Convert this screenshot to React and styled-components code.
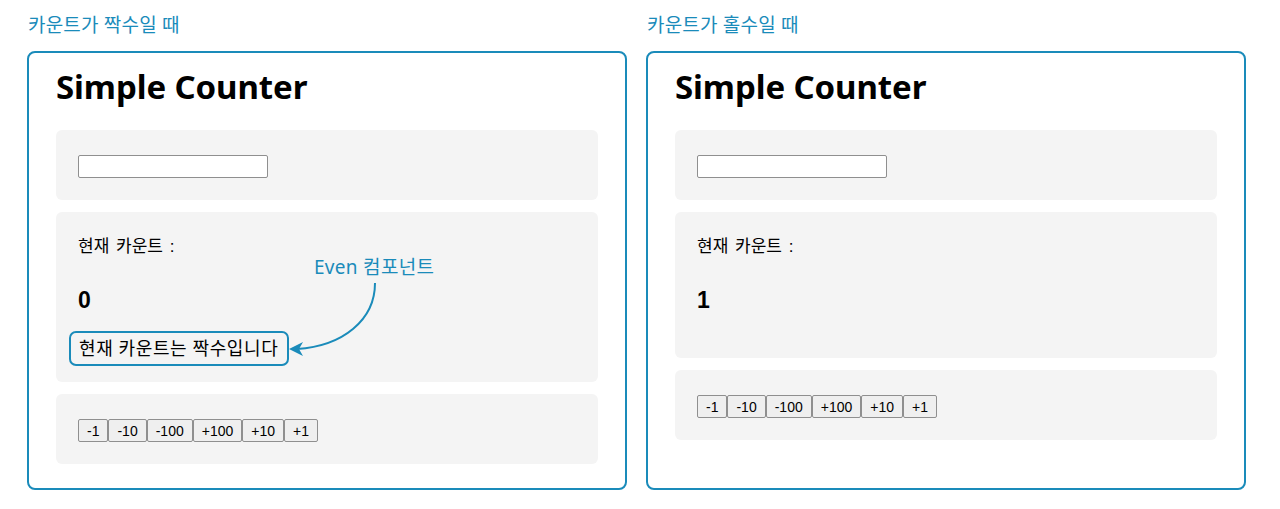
import React from 'react';
import styled, { createGlobalStyle } from 'styled-components';

const TEAL = '#1a8bba';
const STEPS = [-1, -10, -100, 100, 10, 1];

const GlobalStyle = createGlobalStyle`
    body{
        margin:0;
        background:#fff;
        font-family:"Liberation Sans", "Noto Sans CJK KR", sans-serif;
        color:#000;
    }
`;

const Page = styled.div`
    display:flex;
    gap:19px;
    padding:13px 0 0 27px;
`;
const Column = styled.div`
    width:600px;
    display:flex;
    flex-direction:column;
`;
const Caption = styled.div`
    font-family:"Noto Sans", "Noto Sans CJK KR", sans-serif;
    font-size:19px;
    line-height:24px;
    letter-spacing:0.2px;
    color:${TEAL};
    padding-left:1px;
    margin-bottom:14px;
`;
const Card = styled.div`
    flex:1;
    border:2px solid ${TEAL};
    border-radius:8px;
    padding:14px 27px 24px;
`;
const Title = styled.h1`
    margin:0 0 23px;
    font-family:"Noto Sans", sans-serif;
    font-size:33px;
    line-height:40px;
    font-weight:700;
    letter-spacing:-0.1px;
`;
const Stack = styled.div`
    display:flex;
    flex-direction:column;
    gap:12px;
`;
const Panel = styled.div`
    background:#f4f4f4;
    border-radius:6px;
    padding:25px 22px 22px;
`;
const CountPanel = styled(Panel)`
    position:relative;
    padding:23px 22px ${props => props.$hasMessage ? '16px' : '43px'};
`;
const TextInput = styled.input`
    display:block;
    box-sizing:border-box;
    width:190px;
    height:23px;
    margin:0;
    border:1px solid #8f8f8f;
    border-radius:2px;
    background:#fff;
`;
const Label = styled.div`
    font-size:17px;
    line-height:24px;
    word-spacing:2px;
`;
const Count = styled.div`
    margin-top:26px;
    font-size:23px;
    line-height:30px;
    font-weight:700;
`;
const EvenMessage = styled.div`
    display:inline-block;
    margin:16px 0 0 -9px;
    padding:3px 9px 3px 8px;
    border:2px solid ${TEAL};
    border-radius:7px;
    font-family:"Noto Sans", "Noto Sans CJK KR", sans-serif;
    font-size:18px;
    line-height:25px;
    letter-spacing:0.6px;
`;
const Note = styled.div`
    position:absolute;
    left:258px;
    top:43px;
    font-family:"Noto Sans", "Noto Sans CJK KR", sans-serif;
    font-size:19px;
    line-height:24px;
    letter-spacing:0.3px;
    color:${TEAL};
`;
const Arrow = styled.svg`
    position:absolute;
    left:225px;
    top:66px;
    overflow:visible;
`;
const Buttons = styled.div`
    display:flex;
`;
const StepButton = styled.button`
    height:23px;
    margin:0;
    padding:0 8px;
    border:1px solid #8f8f8f;
    border-radius:2px;
    background:#efefef;
    font-family:"Liberation Sans", sans-serif;
    font-size:14px;
    color:#000;
`;

function Counter({caption, count}){
    const isEven = count % 2 === 0;
    return(
        <Column>
            <Caption>{caption}</Caption>
            <Card>
                <Title>Simple Counter</Title>
                <Stack>
                    <Panel>
                        <TextInput />
                    </Panel>
                    <CountPanel $hasMessage={isEven}>
                        <Label>현재 카운트 :</Label>
                        <Count>{count}</Count>
                        {isEven && (
                            <>
                                <EvenMessage>현재 카운트는 짝수입니다</EvenMessage>
                                <Note>Even 컴포넌트</Note>
                                <Arrow width="110" height="80" viewBox="0 0 110 80">
                                    <path d="M94 5 C94 42 62 68 16 71" fill="none" stroke={TEAL} strokeWidth="2" />
                                    <polygon points="8,71 22,64 18,71 22,78" fill={TEAL} />
                                </Arrow>
                            </>
                        )}
                    </CountPanel>
                    <Panel>
                        <Buttons>
                            {STEPS.map((step) => (
                                <StepButton key={step}>{step > 0 ? `+${step}` : step}</StepButton>
                            ))}
                        </Buttons>
                    </Panel>
                </Stack>
            </Card>
        </Column>
    );
}

export default function App(){
    return(
        <>
            <GlobalStyle />
            <Page>
                <Counter caption="카운트가 짝수일 때" count={0} />
                <Counter caption="카운트가 홀수일 때" count={1} />
            </Page>
        </>
    );
}
